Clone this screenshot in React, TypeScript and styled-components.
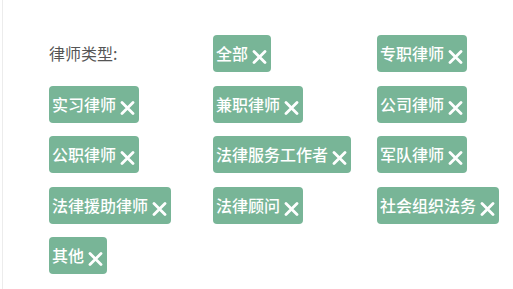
import React from "react";
import styled, { createGlobalStyle } from "styled-components";

const Global = createGlobalStyle`
  html, body { margin: 0; padding: 0; background: #fff; }
  body { font-family: "Noto Sans CJK SC", "Noto Sans", sans-serif; }
`;

const Page = styled.div`
  width: 513px;
  height: 289px;
  box-sizing: border-box;
  margin-left: 2px;
  border-left: 1px solid #ececec;
  padding: 35px 0 0 46px;
`;

const Grid = styled.div`
  display: grid;
  grid-template-columns: 164px 164px 164px;
  grid-auto-rows: 37px;
  row-gap: 13.5px;
  align-items: center;
  justify-items: start;
`;

const Label = styled.div`
  font-size: 16px;
  color: #555;
  line-height: 37px;
`;

const Tag = styled.div`
  display: flex;
  align-items: center;
  height: 37px;
  box-sizing: border-box;
  padding: 0 4px 0 3px;
  gap: 4px;
  background: #78b597;
  border-radius: 4px;
  color: #fff;
  font-size: 16px;
  font-weight: 500;
  line-height: 1;
  white-space: nowrap;
`;

const Text = styled.span`
  margin-top: -1px;
`;

const Close = styled.svg`
  width: 15px;
  height: 14px;
  margin-top: 7px;
  flex: none;
`;

const XIcon = () => (
  <Close viewBox="0 0 15 14">
    <path d="M2 1.5 L13 12.5 M13 1.5 L2 12.5" stroke="#fff" strokeWidth="2.8" strokeLinecap="round" fill="none" />
  </Close>
);

const items = [
  "全部",
  "专职律师",
  "实习律师",
  "兼职律师",
  "公司律师",
  "公职律师",
  "法律服务工作者",
  "军队律师",
  "法律援助律师",
  "法律顾问",
  "社会组织法务",
  "其他",
];

export default function App() {
  return (
    <>
      <Global />
      <Page>
        <Grid>
          <Label>律师类型:</Label>
          {items.map((t) => (
            <Tag key={t}>
              <Text>{t}</Text>
              <XIcon />
            </Tag>
          ))}
        </Grid>
      </Page>
    </>
  );
}
